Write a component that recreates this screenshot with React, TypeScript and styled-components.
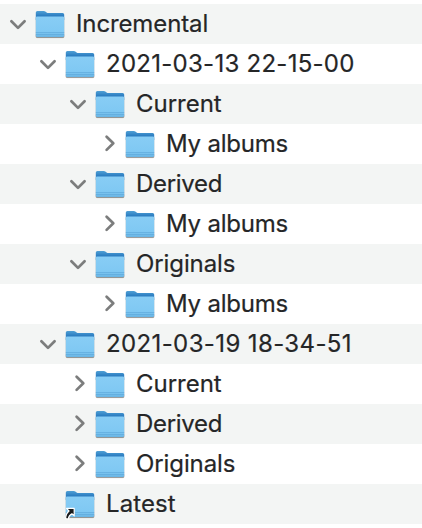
import React from 'react';
import styled, { createGlobalStyle } from 'styled-components';

const GlobalStyle = createGlobalStyle`
  * { box-sizing: border-box; }
  body { margin: 0; background: #fff; }
`;

const Tree = styled.div`
  width: 422px;
  height: 528px;
  padding: 4px 0;
  background: #fff;
  overflow: hidden;
`;

const Row = styled.div<{ $level: number }>`
  display: flex;
  align-items: center;
  height: 40px;
  padding-left: ${(p) => 8 + p.$level * 30}px;
  &:nth-child(odd) { background: #f3f5f4; }
`;

const Toggle = styled.div`
  flex: none;
  width: 20px;
  height: 40px;
`;

const FolderBox = styled.div`
  flex: none;
  width: 36px;
  height: 40px;
  margin: 0 8px 0 4px;
`;

const Label = styled.span<{ $spacing: number }>`
  font-family: Inter, sans-serif;
  font-size: 24px;
  line-height: 40px;
  letter-spacing: ${(p) => p.$spacing}px;
  color: #252627;
  -webkit-text-stroke: 0.2px #252627;
  white-space: pre;
`;

const Chevron = ({ open }: { open: boolean }) => (
  <svg width="20" height="40" viewBox="0 0 20 40" fill="none" stroke="#7c7d7d" strokeWidth="2.7" strokeLinecap="round" strokeLinejoin="round">
    <path d={open ? 'M3.4 17.2L10 23.9L16.6 17.2' : 'M8.6 12.7L15.3 19.3L8.6 25.9'} />
  </svg>
);

const Folder = ({ alias }: { alias?: boolean }) => (
  <svg width="36" height="40" viewBox="0 0 36 40">
    <defs>
      <linearGradient id="front" x1="0" y1="0" x2="0" y2="1">
        <stop offset="0" stopColor="#88cdf5" />
        <stop offset="0.75" stopColor="#7fc8f3" />
        <stop offset="1" stopColor="#68b4e4" />
      </linearGradient>
      <linearGradient id="back" x1="0" y1="0" x2="0" y2="1">
        <stop offset="0" stopColor="#4f9fd5" />
        <stop offset="0.55" stopColor="#2b7cc0" />
        <stop offset="1" stopColor="#2b7cc0" />
      </linearGradient>
    </defs>
    <rect x="3.4" y="12.5" width="29.2" height="21.7" rx="1.6" fill="#000" opacity=".12" />
    <rect x="3.8" y="30" width="28.4" height="4" rx="1.5" fill="#000" opacity=".3" />
    <path d="M3.8 8.6Q3.8 7.1 5.4 7.1H11.6Q12.8 7.1 13.7 7.8L14.6 8.4Q15.3 8.9 16.4 8.9H30.6Q32.2 8.9 32.2 10.5V16H3.8Z" fill="url(#back)" />
    <path d="M3.8 13.8Q3.8 12.5 5.1 12.5H30.9Q32.2 12.5 32.2 13.8V31.5Q32.2 33 30.7 33H5.3Q3.8 33 3.8 31.5Z" fill="url(#front)" />
    <path d="M3.8 28.5H32.2M3.8 30.5H32.2" stroke="#5aa6d8" strokeWidth=".8" opacity=".75" />
    {alias && (
      <path d="M4.5 24.4H12.2V31.9L9.9 29.8Q6.8 31.5 6.3 35L3.6 34.5Q3.7 29.8 7 27Z" fill="#17191b" stroke="#fff" strokeWidth="1.2" strokeLinejoin="round" />
    )}
  </svg>
);

type Item = { name: string; level: number; state: 'open' | 'closed' | 'none'; spacing: number };

const items: Item[] = [
  { name: 'Incremental', level: 0, state: 'open', spacing: -0.12 },
  { name: '2021-03-13 22-15-00', level: 1, state: 'open', spacing: 0.27 },
  { name: 'Current', level: 2, state: 'open', spacing: -0.02 },
  { name: 'My albums', level: 3, state: 'closed', spacing: -0.22 },
  { name: 'Derived', level: 2, state: 'open', spacing: -0.3 },
  { name: 'My albums', level: 3, state: 'closed', spacing: -0.22 },
  { name: 'Originals', level: 2, state: 'open', spacing: -0.1 },
  { name: 'My albums', level: 3, state: 'closed', spacing: -0.22 },
  { name: '2021-03-19 18-34-51', level: 1, state: 'open', spacing: 0.38 },
  { name: 'Current', level: 2, state: 'closed', spacing: -0.02 },
  { name: 'Derived', level: 2, state: 'closed', spacing: -0.3 },
  { name: 'Originals', level: 2, state: 'closed', spacing: -0.1 },
  { name: 'Latest', level: 1, state: 'none', spacing: 0.1 },
];

export default function App() {
  return (
    <>
      <GlobalStyle />
      <Tree>
        {items.map((item, i) => (
          <Row key={i} $level={item.level}>
            <Toggle>{item.state !== 'none' && <Chevron open={item.state === 'open'} />}</Toggle>
            <FolderBox><Folder alias={item.state === 'none'} /></FolderBox>
            <Label $spacing={item.spacing}>{item.name}</Label>
          </Row>
        ))}
      </Tree>
    </>
  );
}
